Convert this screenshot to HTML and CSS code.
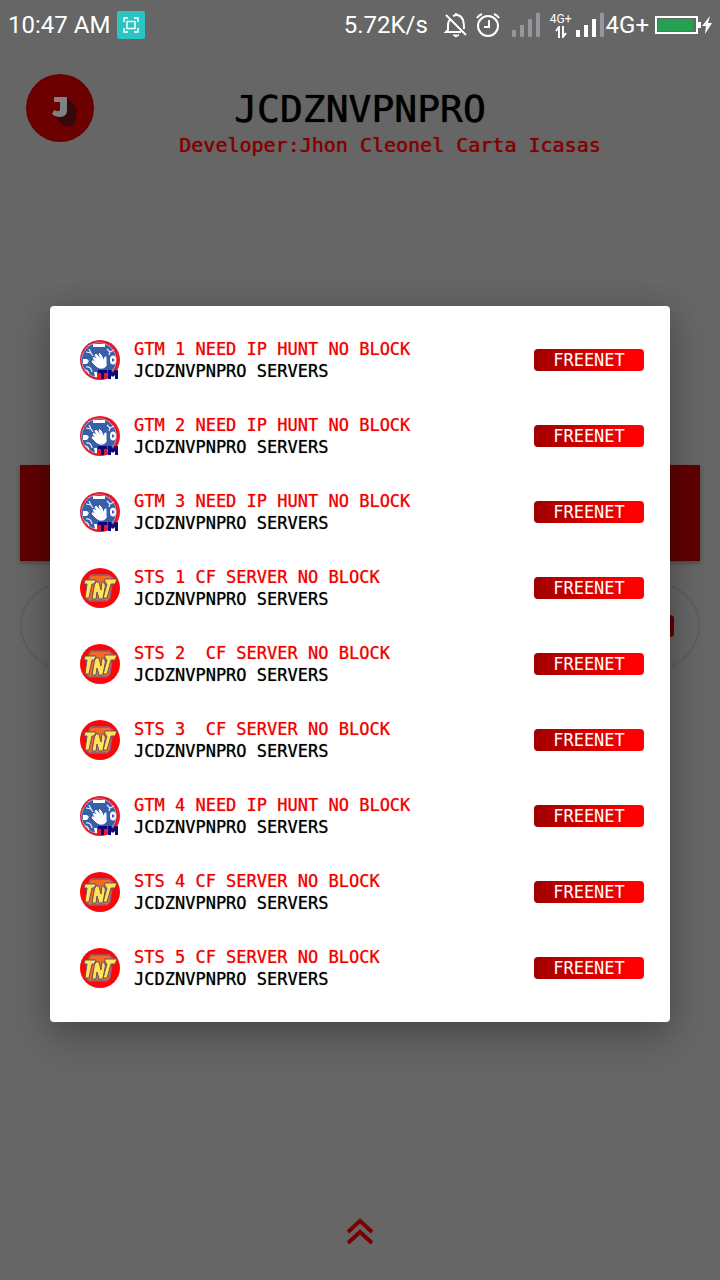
FILE: index.html
```html
<!DOCTYPE html>
<html lang="en">
<head>
<meta charset="utf-8">
<meta name="viewport" content="width=device-width, initial-scale=1">
<title>JCDZNVPNPRO</title>
<link rel="stylesheet" href="styles.css">
</head>
<body>
<svg class="defs" aria-hidden="true">
  <symbol id="tm" viewBox="0 0 40 40">
    <circle cx="20" cy="20" r="20" fill="#e5192b"/>
    <circle cx="19" cy="20" r="17.500" fill="#c9d6ec"/>
    <circle cx="19" cy="20" r="17" fill="#3a5fa9"/>
    <path d="M13 4h12v3H13zM3 19h4l2 2-2 3H3zM14 32h5v5h-4z" fill="#fff"/>
    <path d="M6 12l5 1 2 3M9 9l2 4M27 9l3 3 4-2M30 12l-1 3M6 27q5-1 6 5M5 30q3 0 4 4" fill="none" stroke="#e8eef8" stroke-width="1.200"/>
    <ellipse cx="33" cy="20" rx="3" ry="4.500" fill="#fff"/>
    <path d="M32 18v4l3-2z" fill="#3a5fa9"/>
    <path d="M13 18q1-1 2 0l3 3-3-6q1-2 2 0l4 5-2-6q1-1 2 1l3 6 1-4q1-1 1 1v5q1 4-3 5-4 1-7-2l-4-4q0-2 2-1l2 1z" fill="#fff" stroke="#fff"/>
    <path d="M17 30h10v9H17z" fill="#e5192b"/>
    <path d="M18 30h9v3h-3v6h-3v-6h-3zM28 30h3l2 3 2-3h3v9h-3v-4l-2 2-2-2v4h-3z" fill="#08087c"/>
  </symbol>
  <symbol id="tnt" viewBox="0 0 40 40">
    <circle cx="20" cy="20" r="20" fill="#fb0709"/>
    <path d="M11 7h18l4 3-3 20-3 3H9l-3-3 3-20z" fill="#f26a25" stroke="#8a5f78" stroke-width="1.300"/>
    <path d="M5 12h11l-1 4h-3l-3 14H5l2-14H4zM15 14h4l2 8 1-8h4l-3 17h-4l-2-7-1 7h-4zM25 11h12l-2 5h-4l-4 14h-4l4-14h-3z" fill="#ffe45a" stroke="#6b5060" stroke-width="1"/>
  </symbol>
</svg>

<div class="status">
  <time class="status-text">10:47 AM</time>
  <svg class="capture" width="28" height="28" viewBox="0 0 28 28"><rect width="28" height="28" rx="2" fill="#2bc4c3"/><path d="M7 11V7h4M17 7h4v4M21 17v4h-4M11 21H7v-4M10 10.500h8v7h-8z" fill="none" stroke="#fff" stroke-width="1.500"/></svg>
  <span class="status-text speed">5.72K/s</span>
  <svg class="bell" width="24" height="26" viewBox="0 0 24 26" fill="none" stroke="#fff" stroke-width="2"><path d="M2 3l20 20M7 6.500Q4 9 4 13v5l-2 2h15M9 4q7-3 10 4 1 3 1 9"/><path d="M9 23h6l-3 2z" fill="#fff" stroke-width="1"/><path d="M12 1v3"/></svg>
  <svg class="alarm" width="24" height="26" viewBox="0 0 24 26" fill="none" stroke="#fff" stroke-width="2"><circle cx="12" cy="14" r="10"/><path d="M13 8v7H8M1 6q2-3 5-4M23 6q-2-3-5-4"/></svg>
  <svg class="signal" width="28" height="26" viewBox="0 0 28 26" fill="#96969e"><path d="M0 18h4v7H0zM8 13h4v12H8zM16 7h4v18h-4zM24 1h4v24h-4z"/></svg>
  <span class="data"><span class="data-label">4G+</span><svg width="12" height="12" viewBox="0 0 12 12" fill="none" stroke="#fff" stroke-width="2"><path d="M4 12V1L1 5M8 0v11l3-4"/></svg></span>
  <svg class="signal2" width="28" height="26" viewBox="0 0 28 26"><path d="M0 18h4v7H0zM8 13h4v12H8zM16 7h4v18h-4z" fill="#fff"/><path d="M24 1h4v24h-4z" fill="#96969e"/></svg>
  <span class="status-text">4G+</span>
  <svg class="battery" width="58" height="20" viewBox="0 0 58 20"><rect x="1" y="2" width="41" height="16" fill="none" stroke="#fff" stroke-width="2"/><path d="M3 4h35v12H3z" fill="#25a052"/><path d="M43 7h3v6h-3zM55 1l-8 10h4l-1 8 7-11h-4z" fill="#fff"/></svg>
</div>

<main class="app">
  <header class="header">
    <svg class="logo" viewBox="0 0 68 68" role="img" aria-label="JCDZNVPNPRO logo"><circle cx="34" cy="34" r="34" fill="#6c0000"/><path d="M41 24l9 9q2 13-3 18-6 3-10 0l-9-9z" fill="#350909"/><path d="M28 23h13v13q0 7-7 7-5 0-8-3l2-4q6 3 6-1v-7h-6z" fill="#818181"/></svg>
    <h1 class="title">JCDZNVPNPRO</h1>
    <p class="developer">Developer:Jhon Cleonel Carta Icasas</p>
  </header>
  <div class="banner"></div>
  <div class="picker"><span class="picker-tag"></span></div>
  <button class="expand" aria-label="Expand"><svg width="28" height="28" viewBox="0 0 28 28" fill="none" stroke="#780000" stroke-width="4"><path d="M2 14L14 3l12 11M2 25l12-11 12 11"/></svg></button>
</main>

<div class="overlay">
  <div class="dialog" role="dialog" aria-label="Servers">
    <ul class="servers">
      <li class="server"><svg class="server-icon"><use href="#tm"/></svg><div class="server-text"><p class="server-name">GTM 1 NEED IP HUNT NO BLOCK</p><p class="server-info">JCDZNVPNPRO SERVERS</p></div><span class="tag">FREENET</span></li>
      <li class="server"><svg class="server-icon"><use href="#tm"/></svg><div class="server-text"><p class="server-name">GTM 2 NEED IP HUNT NO BLOCK</p><p class="server-info">JCDZNVPNPRO SERVERS</p></div><span class="tag">FREENET</span></li>
      <li class="server"><svg class="server-icon"><use href="#tm"/></svg><div class="server-text"><p class="server-name">GTM 3 NEED IP HUNT NO BLOCK</p><p class="server-info">JCDZNVPNPRO SERVERS</p></div><span class="tag">FREENET</span></li>
      <li class="server"><svg class="server-icon"><use href="#tnt"/></svg><div class="server-text"><p class="server-name">STS 1 CF SERVER NO BLOCK</p><p class="server-info">JCDZNVPNPRO SERVERS</p></div><span class="tag">FREENET</span></li>
      <li class="server"><svg class="server-icon"><use href="#tnt"/></svg><div class="server-text"><p class="server-name">STS 2  CF SERVER NO BLOCK</p><p class="server-info">JCDZNVPNPRO SERVERS</p></div><span class="tag">FREENET</span></li>
      <li class="server"><svg class="server-icon"><use href="#tnt"/></svg><div class="server-text"><p class="server-name">STS 3  CF SERVER NO BLOCK</p><p class="server-info">JCDZNVPNPRO SERVERS</p></div><span class="tag">FREENET</span></li>
      <li class="server"><svg class="server-icon"><use href="#tm"/></svg><div class="server-text"><p class="server-name">GTM 4 NEED IP HUNT NO BLOCK</p><p class="server-info">JCDZNVPNPRO SERVERS</p></div><span class="tag">FREENET</span></li>
      <li class="server"><svg class="server-icon"><use href="#tnt"/></svg><div class="server-text"><p class="server-name">STS 4 CF SERVER NO BLOCK</p><p class="server-info">JCDZNVPNPRO SERVERS</p></div><span class="tag">FREENET</span></li>
      <li class="server"><svg class="server-icon"><use href="#tnt"/></svg><div class="server-text"><p class="server-name">STS 5 CF SERVER NO BLOCK</p><p class="server-info">JCDZNVPNPRO SERVERS</p></div><span class="tag">FREENET</span></li>
    </ul>
  </div>
</div>
</body>
</html>
```

FILE: styles.css
```css
* { box-sizing: border-box; }
body {
  margin: 0;
  min-height: 100vh;
  position: relative;
  display: flex;
  flex-direction: column;
  background: #666;
  font-family: "DejaVu Sans Mono", monospace;
}
h1, p, ul { margin: 0; padding: 0; }
svg { flex-shrink: 0; }
.defs { position: absolute; width: 0; height: 0; }

.status {
  display: flex;
  align-items: center;
  height: 50px;
  padding: 0 7px 0 8px;
  color: #fff;
  font-family: Roboto, sans-serif;
}
.status-text { font-size: 24px; line-height: 28px; white-space: nowrap; }
.capture { margin-left: 7px; }
.speed { margin-left: auto; }
.bell { margin-left: 16px; }
.alarm { margin-left: 8px; }
.signal { margin-left: 12px; }
.data {
  display: flex;
  flex-direction: column;
  align-items: center;
  margin: 0 4px 0 10px;
}
.data-label { font-size: 12px; line-height: 14px; }
.signal2 { margin-right: 2px; }
.battery { margin-left: 6px; }

.app { flex: 1; display: flex; flex-direction: column; }
.header {
  display: grid;
  grid-template-columns: 60px 1fr;
  padding: 24px 40px 0;
}
.logo {
  grid-area: 1 / 1 / 3 / 2;
  width: 68px;
  height: 68px;
  margin-left: -14px;
}
.title {
  grid-area: 1 / 1 / 2 / 3;
  padding-top: 11px;
  font-size: 38px;
  line-height: 48px;
  font-weight: 400;
  text-align: center;
  color: #000;
  text-shadow: 0 0 1px #000;
}
.developer {
  grid-area: 2 / 2 / 3 / 3;
  font-size: 20px;
  line-height: 24px;
  text-align: center;
  color: #850000;
  text-shadow: 0 0 1px #850000;
}
.banner {
  height: 96px;
  margin: 308px 20px 0;
  background: #600000;
  box-shadow: 0 2px 4px #4a4a4a;
}
.picker {
  display: flex;
  align-items: center;
  justify-content: flex-end;
  height: 86px;
  margin: 22px 20px 0;
  padding-right: 24px;
  border: 2px solid #5e5e5e;
  border-radius: 43px;
}
.picker-tag { width: 110px; height: 22px; border-radius: 4px; background: #660000; }
.expand {
  align-self: center;
  display: flex;
  margin: auto 0 34px;
  padding: 0;
  border: 0;
  background: none;
}

.overlay {
  position: absolute;
  inset: 48px 0 0;
  display: flex;
  align-items: center;
  padding: 0 50px;
}
.dialog {
  flex: 1;
  padding: 16px 26px 16px 30px;
  border-radius: 4px;
  background: #fff;
  box-shadow: 0 16px 40px rgba(0, 0, 0, 0.24), 0 0 24px rgba(0, 0, 0, 0.12);
}
.servers { list-style: none; }
.server { display: flex; align-items: center; gap: 14px; height: 76px; }
.server-icon { width: 40px; height: 40px; }
.server-text {
  flex: 1;
  font-size: 17px;
  line-height: 22px;
  white-space: pre;
}
.server-name { color: #f00000; text-shadow: 0 0 1px rgba(240, 0, 0, 0.6); }
.server-info { color: #000; text-shadow: 0 0 1px rgba(0, 0, 0, 0.6); }
.tag {
  width: 110px;
  border-radius: 4px;
  background: linear-gradient(90deg, #a00000, #f00 90%);
  color: #fff;
  font-size: 17px;
  line-height: 22px;
  text-align: center;
}
```
